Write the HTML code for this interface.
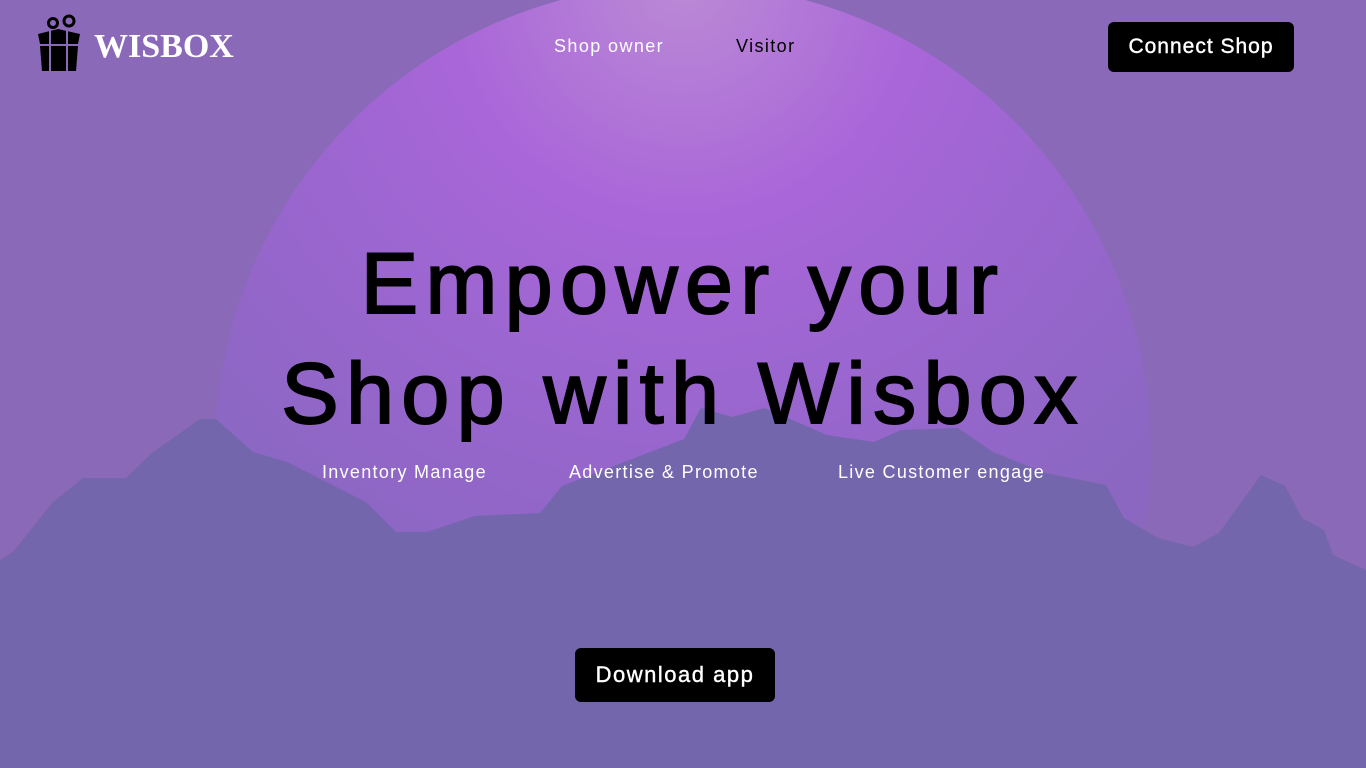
<!DOCTYPE html>
<html><head><meta charset="utf-8"><style>
html,body{margin:0;padding:0;width:1366px;height:768px;overflow:clip}
body{background:#8a69b9;font-family:"Liberation Sans",sans-serif}
.wrap{position:relative;width:1366px;height:768px;overflow:clip;background:#8a69b9}
svg{display:block}
svg.m{position:absolute;left:0;top:0}
.nav{position:absolute;font-size:18px;top:36px;letter-spacing:1.4px}
.btn{position:absolute;background:#000;color:#fff;border-radius:6px;font-size:21px;text-align:center;-webkit-text-stroke:0.4px #fff}
h1{position:absolute;left:0;width:1366px;text-align:center;margin:0;font-weight:normal;font-size:86px;line-height:110px;top:229px;color:#000;letter-spacing:7.5px;-webkit-text-stroke:2px #000}
.f{position:absolute;top:462px;color:#fff;font-size:18px;letter-spacing:1.3px}
</style></head><body><div class="wrap">
<svg class="m" width="1366" height="768">
<defs><radialGradient id="g" cx="683" cy="-16" r="936" gradientUnits="userSpaceOnUse">
<stop offset="0" stop-color="#bb8ad6"/><stop offset="0.25" stop-color="#a966d8"/><stop offset="0.45" stop-color="#9a66cf"/><stop offset="0.7" stop-color="#8b67c2"/><stop offset="1" stop-color="#8a68b9"/></radialGradient></defs>
<path d="M338 768 A468 468 0 1 1 1028 768 Z" fill="url(#g)"/>
<polygon fill="#7366ad" points="0,560 13,552 52,503 83,478 126,478 152,453 200,419 216,419 253,452 287,462 366,502 396,532 427,532 475,516 540,513 562,486 684,439 701,408 732,417 765,408 827,435 874,442 901,430 958,428 993,452 1045,473 1106,485 1124,518 1158,538 1193,547 1219,533 1261,475 1285,486 1302,518 1324,530 1333,555 1366,570 1366,768 0,768"/></svg>
<svg style="position:absolute;left:36px;top:14px" width="46" height="58" viewBox="0 0 46 58">
<circle cx="17" cy="9" r="4.5" fill="none" stroke="#000" stroke-width="3"/><circle cx="33" cy="7" r="5" fill="none" stroke="#000" stroke-width="3"/>
<path d="M2 20 L22 15 L44 20 L42 30 L4 30Z M4 32 L42 32 L40 57 L6 57Z" fill="#000"/>
<path d="M14 16 L14 57 M31 16 L31 57 M2 31 L44 31" stroke="#8a69b9" stroke-width="2"/></svg>
<div style="position:absolute;left:94px;top:28px;color:#fff;font-family:'Liberation Serif',serif;font-weight:bold;font-size:34px">WISBOX</div>
<div class="nav" style="left:554px;color:#fff">Shop owner</div>
<div class="nav" style="left:736px;color:#000">Visitor</div>
<div class="btn" style="left:1108px;top:22px;width:186px;height:50px;line-height:50px;letter-spacing:1px">Connect&nbsp;Shop</div>
<h1>Empower your<br>Shop with Wisbox</h1>
<div class="f" style="left:322px">Inventory Manage</div>
<div class="f" style="left:569px">Advertise &amp; Promote</div>
<div class="f" style="left:838px">Live Customer engage</div>
<div class="btn" style="left:575px;top:648px;width:200px;height:54px;line-height:54px;font-size:22px;letter-spacing:1.5px">Download&nbsp;app</div>
</div></body></html>
